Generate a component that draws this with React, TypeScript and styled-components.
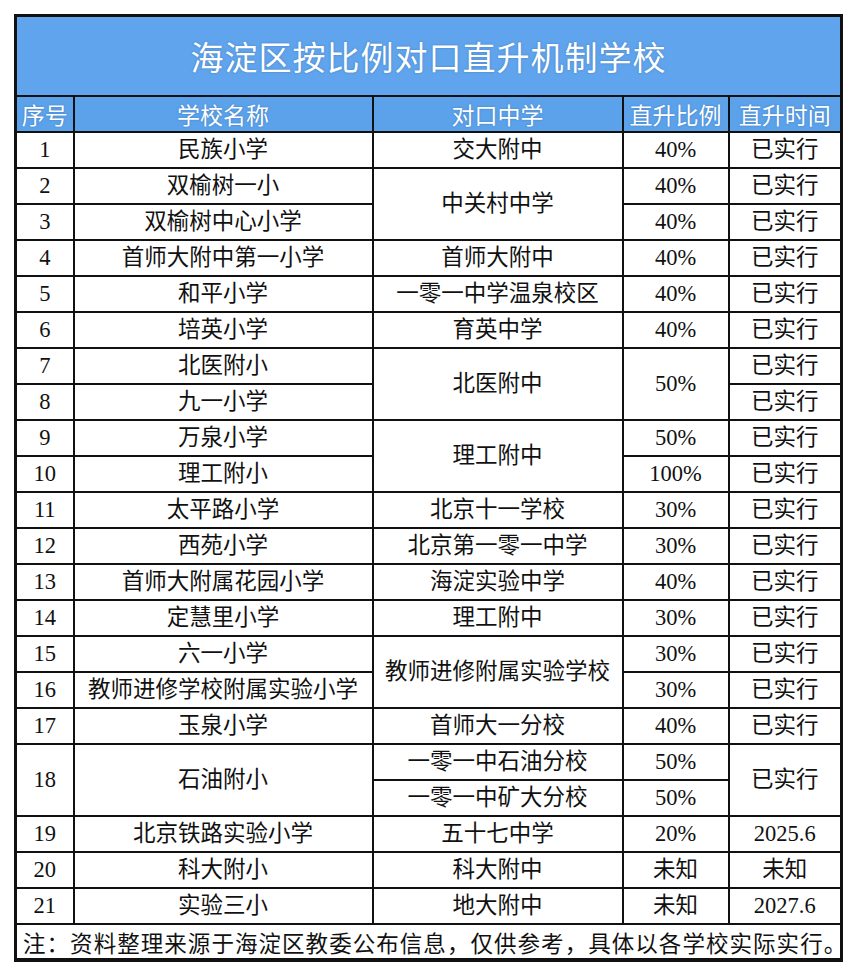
import styled, { createGlobalStyle } from "styled-components";

interface Cell {
  text: string;
  rs?: number;
}

const rows: Cell[][] = [
  [{ text: "1" }, { text: "民族小学" }, { text: "交大附中" }, { text: "40%" }, { text: "已实行" }],
  [{ text: "2" }, { text: "双榆树一小" }, { text: "中关村中学", rs: 2 }, { text: "40%" }, { text: "已实行" }],
  [{ text: "3" }, { text: "双榆树中心小学" }, { text: "40%" }, { text: "已实行" }],
  [{ text: "4" }, { text: "首师大附中第一小学" }, { text: "首师大附中" }, { text: "40%" }, { text: "已实行" }],
  [{ text: "5" }, { text: "和平小学" }, { text: "一零一中学温泉校区" }, { text: "40%" }, { text: "已实行" }],
  [{ text: "6" }, { text: "培英小学" }, { text: "育英中学" }, { text: "40%" }, { text: "已实行" }],
  [{ text: "7" }, { text: "北医附小" }, { text: "北医附中", rs: 2 }, { text: "50%", rs: 2 }, { text: "已实行" }],
  [{ text: "8" }, { text: "九一小学" }, { text: "已实行" }],
  [{ text: "9" }, { text: "万泉小学" }, { text: "理工附中", rs: 2 }, { text: "50%" }, { text: "已实行" }],
  [{ text: "10" }, { text: "理工附小" }, { text: "100%" }, { text: "已实行" }],
  [{ text: "11" }, { text: "太平路小学" }, { text: "北京十一学校" }, { text: "30%" }, { text: "已实行" }],
  [{ text: "12" }, { text: "西苑小学" }, { text: "北京第一零一中学" }, { text: "30%" }, { text: "已实行" }],
  [{ text: "13" }, { text: "首师大附属花园小学" }, { text: "海淀实验中学" }, { text: "40%" }, { text: "已实行" }],
  [{ text: "14" }, { text: "定慧里小学" }, { text: "理工附中" }, { text: "30%" }, { text: "已实行" }],
  [{ text: "15" }, { text: "六一小学" }, { text: "教师进修附属实验学校", rs: 2 }, { text: "30%" }, { text: "已实行" }],
  [{ text: "16" }, { text: "教师进修学校附属实验小学" }, { text: "30%" }, { text: "已实行" }],
  [{ text: "17" }, { text: "玉泉小学" }, { text: "首师大一分校" }, { text: "40%" }, { text: "已实行" }],
  [{ text: "18", rs: 2 }, { text: "石油附小", rs: 2 }, { text: "一零一中石油分校" }, { text: "50%" }, { text: "已实行", rs: 2 }],
  [{ text: "一零一中矿大分校" }, { text: "50%" }],
  [{ text: "19" }, { text: "北京铁路实验小学" }, { text: "五十七中学" }, { text: "20%" }, { text: "2025.6" }],
  [{ text: "20" }, { text: "科大附小" }, { text: "科大附中" }, { text: "未知" }, { text: "未知" }],
  [{ text: "21" }, { text: "实验三小" }, { text: "地大附中" }, { text: "未知" }, { text: "2027.6" }],
];

const headers = ["序号", "学校名称", "对口中学", "直升比例", "直升时间"];
const widths = [58, 299, 250, 106, 113];

const GlobalStyle = createGlobalStyle`
  body {
    margin: 0;
    background: #ffffff;
    font-family: "Liberation Serif", "Noto Sans CJK SC", serif;
  }
`;

const Page = styled.div`
  padding: 14px 0 0 14px;
`;

const Table = styled.table`
  width: 828px;
  border-collapse: collapse;
  table-layout: fixed;
  border: 3px solid #111;
`;

const TitleCell = styled.th`
  height: 78px;
  background: #5fa4ec;
  color: #ffffff;
  font-size: 33px;
  font-weight: 400;
  letter-spacing: 1px;
  text-shadow: 0 0 2px rgba(40, 80, 140, 0.5);
  border: 2px solid #111;
  padding: 0;
`;

const HeadCell = styled.th`
  height: 34px;
  background: #5ba2ea;
  color: #ffffff;
  font-size: 23px;
  font-weight: 400;
  text-shadow: 0 0 2px rgba(40, 80, 140, 0.5);
  border: 2px solid #111;
  padding: 0;
  white-space: nowrap;
`;

const Td = styled.td`
  height: 34px;
  color: #111;
  font-size: 22.5px;
  text-align: center;
  border: 2px solid #111;
  padding: 0;
  white-space: nowrap;
  line-height: 1;
`;

const NoteCell = styled.td`
  height: 33px;
  color: #111;
  font-size: 22.5px;
  letter-spacing: 1.05px;
  text-align: left;
  padding: 0 0 0 6px;
  border: 2px solid #111;
  border-bottom: 4px solid #111;
  white-space: nowrap;
`;

export default function App() {
  return (
    <Page>
      <GlobalStyle />
      <Table>
        <colgroup>
          {widths.map((w, i) => (
            <col key={i} style={{ width: w }} />
          ))}
        </colgroup>
        <thead>
          <tr>
            <TitleCell colSpan={5}>海淀区按比例对口直升机制学校</TitleCell>
          </tr>
          <tr>
            {headers.map((h) => (
              <HeadCell key={h}>{h}</HeadCell>
            ))}
          </tr>
        </thead>
        <tbody>
          {rows.map((row, i) => (
            <tr key={i}>
              {row.map((c, j) => (
                <Td key={j} rowSpan={c.rs}>
                  {c.text}
                </Td>
              ))}
            </tr>
          ))}
          <tr>
            <NoteCell colSpan={5}>
              注：资料整理来源于海淀区教委公布信息，仅供参考，具体以各学校实际实行。
            </NoteCell>
          </tr>
        </tbody>
      </Table>
    </Page>
  );
}
